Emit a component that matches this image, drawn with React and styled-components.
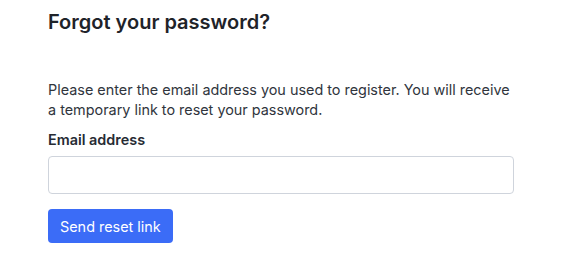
import styled, { createGlobalStyle } from "styled-components";

const GlobalStyle = createGlobalStyle`
    body {
        margin: 0;
        background: #ffffff;
        font-family: Inter, "Noto Sans", sans-serif;
        color: #262b33;
    }
`

const Page = styled.div`
    padding: 8px 48px 0;
    width: 466px;
`

const Title = styled.h2`
    margin: 0 0 44px;
    font-size: 20px;
    line-height: 28px;
    font-weight: 600;
    color: #1f2329;
`

const Intro = styled.p`
    margin: 0 0 10px;
    font-size: 14.4px;
    line-height: 20px;
    color: #30353d;
`

const Form = styled.form`
    display: flex;
    flex-direction: column;
    align-items: flex-start;
`

const Label = styled.label`
    font-size: 14.4px;
    line-height: 20px;
    font-weight: 600;
    color: #262b33;
    margin-bottom: 6px;
`

const Input = styled.input`
    box-sizing: border-box;
    width: 100%;
    height: 38px;
    border: 1px solid #cfd4dc;
    border-radius: 4px;
    padding: 0 12px;
    font: inherit;
    font-size: 14.4px;
    margin-bottom: 15px;
    outline: none;
`

const Button = styled.button`
    height: 34px;
    padding: 0 12px;
    border: none;
    border-radius: 4px;
    background: #3b6cf7;
    color: #ffffff;
    font-family: inherit;
    font-size: 14.4px;
    cursor: pointer;
`

function App() {
    return (
        <>
            <GlobalStyle />
            <Page>
                <Title>Forgot your password?</Title>
                <Intro>
                    Please enter the email address you used to register. You will receive a temporary link to reset your password.
                </Intro>
                <Form onSubmit={e => e.preventDefault()}>
                    <Label htmlFor="email">Email address</Label>
                    <Input id="email" type="email" />
                    <Button type="submit">Send reset link</Button>
                </Form>
            </Page>
        </>
    )
}

export default App
